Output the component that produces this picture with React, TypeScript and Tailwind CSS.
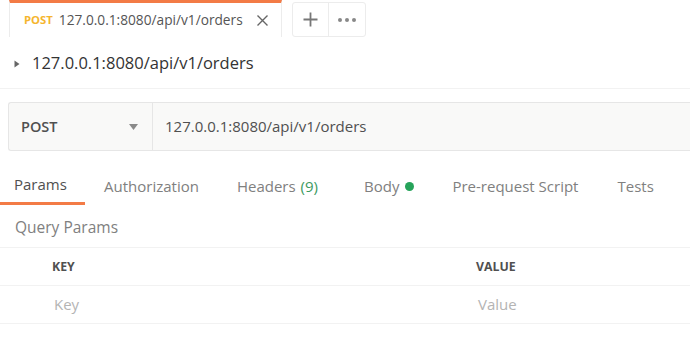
import React from "react";

const tabs = [
  { label: "Params", active: true },
  { label: "Authorization" },
  { label: "Headers", count: "(9)" },
  { label: "Body", dot: true },
  { label: "Pre-request Script" },
  { label: "Tests" },
];

const App: React.FC = () => {
  return (
    <div className="w-[690px] h-[353px] overflow-hidden bg-white font-['Open_Sans',sans-serif] text-[#505050]">
      {/* request tabs strip */}
      <div className="flex items-start h-[38px]">
        <div className="ml-[9px] w-[273px] h-[37px] flex items-center border-t-[3px] border-[#f37b46] border-l border-r border-l-[#ececec] border-r-[#ececec] pl-[14px] pr-[6px] pt-[1px]">
          <span className="text-[11.3px] font-bold text-[#f5b52e] mr-[6px]">POST</span>
          <span className="text-[13.7px] text-[#555]">127.0.0.1:8080/api/v1/orders</span>
          <svg className="ml-auto mr-[6px]" width="13" height="13" viewBox="0 0 13 13">
            <path d="M1.5 1.5 L11.5 11.5 M11.5 1.5 L1.5 11.5" stroke="#666" strokeWidth="1.4" />
          </svg>
        </div>
        <div className="ml-[10px] mt-[2px] h-[35px] flex border border-[#ececec] rounded-[3px]">
          <div className="w-[36px] flex items-center justify-center border-r border-[#ececec]">
            <svg width="15" height="15" viewBox="0 0 15 15">
              <path d="M7.5 0.5 V14.5 M0.5 7.5 H14.5" stroke="#777" strokeWidth="1.8" />
            </svg>
          </div>
          <div className="w-[36px] flex items-center justify-center gap-[3px]">
            <span className="w-[4px] h-[4px] rounded-full bg-[#888]" />
            <span className="w-[4px] h-[4px] rounded-full bg-[#888]" />
            <span className="w-[4px] h-[4px] rounded-full bg-[#888]" />
          </div>
        </div>
      </div>

      {/* breadcrumb */}
      <div className="h-[51px] flex items-center pl-[13px] pt-[1px] border-b border-[#f2f2f2]">
        <svg width="8" height="8" viewBox="0 0 8 8" className="mr-[11px]">
          <path d="M1.5 0.5 L6.5 4 L1.5 7.5 Z" fill="#666" />
        </svg>
        <span className="text-[16.5px] text-[#333]">127.0.0.1:8080/api/v1/orders</span>
      </div>

      {/* url bar */}
      <div className="mt-[13px] ml-[8px] h-[49px] flex border border-[#e6e6e6] rounded-l-[3px] bg-[#f9f9f8] border-r-0">
        <div className="w-[144px] flex items-center pl-[12px] pr-[14px] border-r border-[#e6e6e6]">
          <span className="text-[14.5px] font-semibold text-[#505050]">POST</span>
          <svg className="ml-auto" width="9" height="6" viewBox="0 0 9 6">
            <path d="M0 0 H9 L4.5 6 Z" fill="#8a8a8a" />
          </svg>
        </div>
        <div className="flex items-center pl-[12px] text-[15px] text-[#505050]">127.0.0.1:8080/api/v1/orders</div>
      </div>

      {/* section tabs */}
      <div className="mt-[19px] h-[35px] flex">
        {tabs.map((t, i) => (
          <div
            key={i}
            className={
              "h-full flex items-center text-[15px] pb-[3px] " +
              (t.active ? "w-[85px] pl-[14px] border-b-[3px] border-[#f37b46] text-[#505050]" : "text-[#808080] mb-[3px]")
            }
            style={i === 0 ? undefined : { marginLeft: [0, 19, 38, 46, 38, 39][i] }}
          >
            {t.label}
            {t.count && <span className="ml-[5px] text-[#3c9a5f]">{t.count}</span>}
            {t.dot && <span className="ml-[6px] w-[9px] h-[9px] rounded-full bg-[#26a35a]" />}
          </div>
        ))}
      </div>

      <div className="h-[43px] flex items-center pl-[15px] pt-[3px] text-[15.5px] text-[#808080] border-b border-[#f2f2f2]">
        Query Params
      </div>

      {/* params table */}
      <div className="grid grid-cols-[424px_1fr] h-[38px] pt-[1px] border-b border-[#f2f2f2] text-[12.3px] font-bold text-[#505050]">
        <div className="flex items-center pl-[52px]">KEY</div>
        <div className="flex items-center pl-[52px]">VALUE</div>
      </div>
      <div className="grid grid-cols-[424px_1fr] h-[38px] border-b border-[#f2f2f2] text-[15px] text-[#b4b4b4]">
        <div className="flex items-center pl-[54px]">Key</div>
        <div className="flex items-center pl-[54px]">Value</div>
      </div>
    </div>
  );
};

export default App;
